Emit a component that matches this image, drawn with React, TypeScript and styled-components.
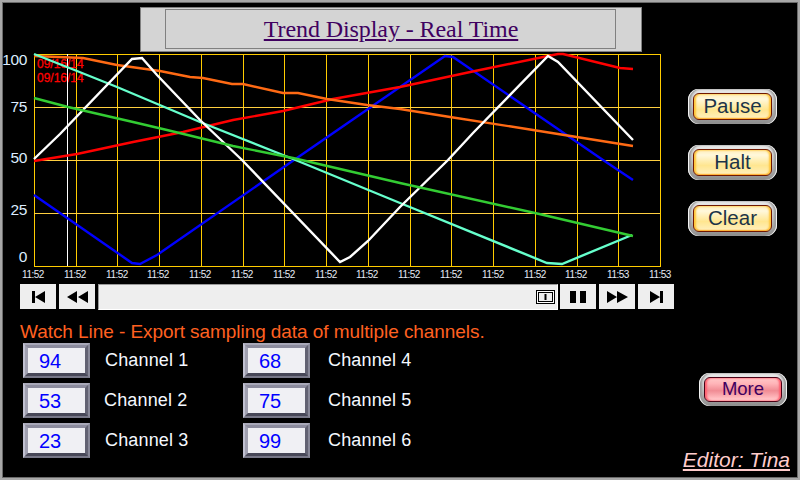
import React from "react";
import styled, { createGlobalStyle } from "styled-components";

const GlobalStyle = createGlobalStyle`
    html, body {
        margin: 0;
        padding: 0;
        background: #000;
    }
    * {
        box-sizing: border-box;
    }
`;

const Frame = styled.div`
    width: 800px;
    height: 480px;
    overflow: hidden;
    background: #000;
    border: 2px solid #a8a8a8;
    padding: 1px;
    box-shadow: inset 0 0 0 1px #6a6a6a;
    font-family: "Liberation Sans", Arial, sans-serif;
    display: flex;
    flex-direction: column;
`;

const TitleBar = styled.header`
    width: 502px;
    height: 45px;
    margin: 4px 0 0 137px;
    padding: 1px 25px 2px 24px;
    background: #d4d4d4;
    border: 1px solid #808080;
    display: flex;
`;

const TitleBox = styled.div`
    flex: 1;
    border: 1px solid #808080;
    display: flex;
    justify-content: center;
    align-items: center;
`;

const Title = styled.h1`
    margin: 0 0 0 1px;
    font-family: "Liberation Serif", "Times New Roman", serif;
    font-size: 24px;
    font-weight: normal;
    line-height: 28px;
    letter-spacing: -0.08px;
    color: #400060;
    text-decoration: underline;
`;

const ChartRow = styled.div`
    display: flex;
    height: 232px;
`;

const ChartSvg = styled.svg`
    display: block;
    width: 677px;
    height: 232px;
    margin-left: -1px;
    flex: none;
`;

const SideButtons = styled.div`
    display: flex;
    flex-direction: column;
    gap: 21px;
    margin-left: 9px;
    padding-top: 37px;
`;

const BevelButton = styled.button<{ $w: number; $h: number }>`
    width: ${(props) => props.$w}px;
    height: ${(props) => props.$h}px;
    padding: 4px 5px;
    border: none;
    border-radius: 11px;
    background: linear-gradient(#ececec 0%, #c4c4c4 50%, #8a8a8a 100%);
    box-shadow: inset 1px 0 0 #f4f4f4, inset -1px 0 0 #f4f4f4, inset 3px 0 2px #9a9a9a, inset -3px 0 2px #9a9a9a;
    display: flex;
    font-family: inherit;
`;

const ButtonFace = styled.span<{ $pink?: boolean }>`
    flex: 1;
    padding-bottom: 2px;
    border-radius: 6px;
    border: 1px solid ${(props) => (props.$pink ? "#4a0014" : "#701800")};
    background: ${(props) =>
        props.$pink
            ? "linear-gradient(#ffc8c8 0%, #ffb4b8 25%, #f08c94 55%, #ffb8bc 85%, #ffd4d4 100%)"
            : "linear-gradient(#ffeeb8 0%, #fff8dc 20%, #ffe690 62%, #fff0c0 100%)"};
    box-shadow: ${(props) =>
        props.$pink
            ? "inset 2px 0 2px #ff6070, inset -2px 0 2px #ff6070"
            : "inset 2px 0 2px #ffc438, inset -2px 0 2px #ffc438, inset 0 -1px 1px #ff9a30"};
    color: ${(props) => (props.$pink ? "#400060" : "#1c3448")};
    font-size: ${(props) => (props.$pink ? 18.5 : 20.5)}px;
    line-height: 22px;
    display: flex;
    justify-content: center;
    align-items: center;
`;

const Toolbar = styled.div`
    display: flex;
    height: 26px;
    margin-left: 17px;
    gap: 3px;
`;

const ToolButton = styled.button`
    width: 36px;
    height: 25px;
    padding: 0;
    border: none;
    background: #eeeeee;
    display: flex;
    justify-content: center;
    align-items: center;
`;

const Slider = styled.div`
    width: 460px;
    height: 26px;
    margin-right: -1px;
    padding-right: 2px;
    background: #eeeeee;
    border: 1px solid;
    border-color: #9a9a9a #ffffff #ffffff #9a9a9a;
    display: flex;
    justify-content: flex-end;
    align-items: center;
`;

const BottomArea = styled.div`
    display: flex;
    justify-content: space-between;
    flex: 1;
`;

const WatchPanel = styled.section`
    padding: 12px 0 0 17px;
`;

const WatchTitle = styled.div`
    height: 21px;
    font-size: 19px;
    line-height: 20px;
    letter-spacing: -0.065px;
    color: #ff6020;
    white-space: nowrap;
`;

const ChannelGrid = styled.div`
    display: grid;
    grid-template-columns: 220px 220px;
    grid-auto-flow: column;
    grid-template-rows: repeat(3, 35px);
    row-gap: 5px;
    margin-left: 3px;
`;

const Channel = styled.div`
    display: flex;
    align-items: center;
`;

const ValueBevel = styled.div`
    width: 67px;
    height: 35px;
    flex: none;
    border: 2px solid;
    border-color: #a8a8b8 #888898 #787888 #c0c0d0;
`;

const ValueField = styled.div`
    height: 100%;
    padding-left: 11px;
    background: #f0f0f4;
    border: 3px solid;
    border-color: #8c8c9e #626272 #484858 #a0a0b0;
    font-size: 20px;
    line-height: 27px;
    color: #0000ff;
`;

const ChannelName = styled.span<{ $gap: number }>`
    margin-left: ${(props) => props.$gap}px;
    font-size: 18px;
    letter-spacing: 0.15px;
    color: #f4f8ff;
    white-space: nowrap;
`;

const RightPanel = styled.div`
    display: flex;
    flex-direction: column;
    align-items: flex-end;
    padding: 63px 7px 0 0;
`;

const MoreWrap = styled.div`
    margin-right: 3px;
`;

const Editor = styled.a`
    margin-top: 42px;
    font-size: 21px;
    line-height: 23px;
    font-style: italic;
    color: #ffcccc;
    text-decoration: underline;
`;

interface Trend {
    color: string;
    points: number[][];
}

const gridX = [76, 117, 159, 201, 243, 284, 326, 368, 410, 451, 493, 535, 577, 618];
const gridY = [107, 160, 213];
const timeX = [33, 75, 117, 158, 200, 242, 284, 326, 367, 409, 451, 493, 535, 576, 618, 660];
const scale = [
    { label: "100", y: 65 },
    { label: "75", y: 112 },
    { label: "50", y: 163 },
    { label: "25", y: 215 },
    { label: "0", y: 262 },
];

// bottom to top, the order the lines cross in
const trends: Trend[] = [
    {
        color: "#0000ff",
        points: [[34, 195], [132, 263], [140, 264], [157, 255], [294, 160], [400, 87], [445, 56], [453, 57], [603, 160], [633, 180]],
    },
    {
        color: "#ff0000",
        points: [[34, 161], [77, 154], [133, 142], [183, 132], [233, 120], [283, 111], [333, 99], [400, 87], [475, 71], [548, 56], [558, 54], [563, 54], [620, 68], [633, 69]],
    },
    {
        color: "#ff6a14",
        points: [[34, 56], [83, 58], [117, 65], [160, 71], [190, 77], [203, 78], [232, 84], [243, 84], [283, 93], [298, 93], [327, 99], [367, 105], [400, 109], [450, 117], [533, 130], [633, 146]],
    },
    {
        color: "#66ffcc",
        points: [[34, 54], [77, 71], [117, 87], [200, 122], [293, 159], [400, 203], [547, 263], [562, 264], [632, 235]],
    },
    {
        color: "#ffffff",
        points: [[34, 159], [60, 134], [132, 59], [142, 58], [157, 75], [200, 120], [242, 160], [340, 262], [350, 257], [368, 241], [400, 207], [448, 160], [473, 133], [548, 56], [558, 62], [633, 140]],
    },
    {
        color: "#33cc33",
        points: [[34, 98], [68, 107], [133, 122], [167, 130], [233, 146], [293, 158], [400, 183], [535, 213], [633, 236]],
    },
];

const channels = [
    { name: "Channel 1", value: 94, gap: 15 },
    { name: "Channel 2", value: 53, gap: 14 },
    { name: "Channel 3", value: 23, gap: 15 },
    { name: "Channel 4", value: 68, gap: 18 },
    { name: "Channel 5", value: 75, gap: 18 },
    { name: "Channel 6", value: 99, gap: 18 },
];

function TrendChart() {
    return (
        <ChartSvg viewBox="2 52 677 232">
            <rect x="34.5" y="54.5" width="626" height="212" fill="#000" stroke="#ffcc00" />
            {gridX.map((x) => (
                <line key={x} x1={x + 0.5} x2={x + 0.5} y1="54" y2="266" stroke="#ffcc00" />
            ))}
            {gridY.map((y) => (
                <line key={y} x1="34" x2="660" y1={y + 0.5} y2={y + 0.5} stroke="#ffd040" />
            ))}
            <text x="37" y="68" fontSize="12" fill="#ff0000" stroke="#ff0000" strokeWidth="0.3" fontFamily="Liberation Sans">09/16/14</text>
            <text x="37" y="82" fontSize="12" fill="#ff0000" stroke="#ff0000" strokeWidth="0.3" fontFamily="Liberation Sans">09/16/14</text>
            <line x1="67.5" x2="67.5" y1="54" y2="266" stroke="#ffffff" />
            {trends.map((trend) => (
                <polyline
                    key={trend.color}
                    points={trend.points.map((p) => p.join(",")).join(" ")}
                    fill="none"
                    stroke={trend.color}
                    strokeWidth="2.4"
                />
            ))}
            {scale.map((s) => (
                <text key={s.label} x="27" y={s.y} textAnchor="end" fontSize="15.5" letterSpacing="-0.4" fill="#dcecff" fontFamily="Liberation Sans">
                    {s.label}
                </text>
            ))}
            {timeX.map((x, i) => (
                <text key={x} x={x} y="278" textAnchor="middle" fontSize="10" letterSpacing="-0.5" fill="#e6ebf6" fontFamily="Liberation Sans">
                    {i < 14 ? "11:52" : "11:53"}
                </text>
            ))}
        </ChartSvg>
    );
}

function Glyph({ d, w }: { d: string; w: number }) {
    return (
        <svg width={w} height="12" viewBox={`0 0 ${w} 12`}>
            <path d={d} fill="#000" />
        </svg>
    );
}

function App() {
    return (
        <Frame>
            <GlobalStyle />
            <TitleBar>
                <TitleBox>
                    <Title>Trend Display - Real Time</Title>
                </TitleBox>
            </TitleBar>
            <ChartRow>
                <TrendChart />
                <SideButtons>
                    <BevelButton $w={89} $h={35}><ButtonFace>Pause</ButtonFace></BevelButton>
                    <BevelButton $w={89} $h={35}><ButtonFace>Halt</ButtonFace></BevelButton>
                    <BevelButton $w={89} $h={35}><ButtonFace>Clear</ButtonFace></BevelButton>
                </SideButtons>
            </ChartRow>
            <Toolbar>
                <ToolButton><Glyph w={13} d="M0 0h3v12H0zM13 0v12L3 6z" /></ToolButton>
                <ToolButton><Glyph w={21} d="M10 0v12L0 6zM21 0v12L11 6z" /></ToolButton>
                <Slider>
                    <svg width="19" height="14" viewBox="0 0 19 14">
                        <rect x="0.5" y="0.5" width="18" height="13" fill="#fff" stroke="#000" />
                        <rect x="2.5" y="2.5" width="14" height="9" fill="#eee" stroke="#000" />
                        <rect x="8.5" y="4" width="2" height="6" fill="#000" />
                    </svg>
                </Slider>
                <ToolButton><Glyph w={16} d="M0 0h6v12H0zM10 0h6v12h-6z" /></ToolButton>
                <ToolButton><Glyph w={21} d="M0 0v12L10 6zM10 0v12L21 6z" /></ToolButton>
                <ToolButton><Glyph w={13} d="M0 0v12L10 6zM10 0h3v12h-3z" /></ToolButton>
            </Toolbar>
            <BottomArea>
                <WatchPanel>
                    <WatchTitle>Watch Line - Export sampling data of multiple channels.</WatchTitle>
                    <ChannelGrid>
                        {channels.map((channel) => (
                            <Channel key={channel.name}>
                                <ValueBevel><ValueField>{channel.value}</ValueField></ValueBevel>
                                <ChannelName $gap={channel.gap}>{channel.name}</ChannelName>
                            </Channel>
                        ))}
                    </ChannelGrid>
                </WatchPanel>
                <RightPanel>
                    <MoreWrap>
                        <BevelButton $w={88} $h={33}><ButtonFace $pink>More</ButtonFace></BevelButton>
                    </MoreWrap>
                    <Editor>Editor: Tina</Editor>
                </RightPanel>
            </BottomArea>
        </Frame>
    );
}

export default App;
